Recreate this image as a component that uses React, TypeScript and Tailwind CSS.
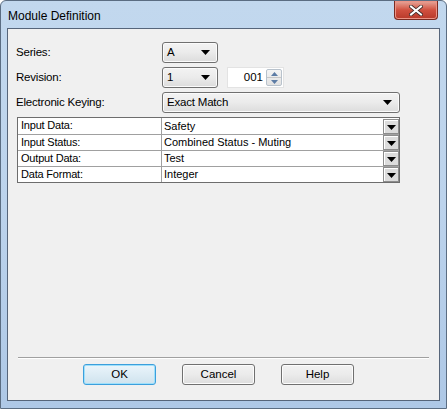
import React from 'react'

const UI = { fontFamily: '"Liberation Sans", Arial, sans-serif' }

function Caret({ className = '' }: { className?: string }) {
  return (
    <svg width="9" height="5" viewBox="0 0 9 5" className={className}>
      <path d="M0 0h9L4.5 5z" fill="#000" />
    </svg>
  )
}

function Combo({ value, className = '' }: { value: string; className?: string }) {
  return (
    <div
      className={`flex h-[21px] items-center justify-between rounded-[3px] border border-[#707070] bg-gradient-to-b from-[#f3f3f3] via-[#ebebeb] to-[#dcdcdc] pl-[4px] pr-[7px] text-[11.5px] tracking-[-0.2px] text-black shadow-[inset_0_0_0_1px_#fbfbfb] ${className}`}
    >
      <span>{value}</span>
      <Caret />
    </div>
  )
}

function Spinner({ value }: { value: string }) {
  return (
    <div className="flex h-[21px] w-[57px] border border-[#e3e3e3] bg-white">
      <span className="flex-1 pr-[3px] text-right text-[11.5px] leading-[19px] text-black">{value}</span>
      <div className="my-[1px] mr-[1px] flex w-[16px] flex-col rounded-[2px] border border-[#b8c2cc] bg-gradient-to-b from-[#f4f4f4] to-[#e2e2e2]">
        <div className="flex flex-1 items-center justify-center border-b border-[#c8c8c8]">
          <svg width="7" height="4" viewBox="0 0 7 4">
            <path d="M0 4L3.5 0 7 4z" fill="#5d7ca5" />
          </svg>
        </div>
        <div className="flex flex-1 items-center justify-center">
          <svg width="7" height="4" viewBox="0 0 7 4">
            <path d="M0 0h7L3.5 4z" fill="#5d7ca5" />
          </svg>
        </div>
      </div>
    </div>
  )
}

const ROWS = [
  ['Input Data:', 'Safety'],
  ['Input Status:', 'Combined Status - Muting'],
  ['Output Data:', 'Test'],
  ['Data Format:', 'Integer'],
]

function Button({ label, isDefault }: { label: string; isDefault?: boolean }) {
  return (
    <button
      className={`h-[21px] w-[73px] rounded-[3px] border text-[11.5px] text-black ${
        isDefault
          ? 'border-[#3c9fdc] bg-gradient-to-b from-[#ebf5fb] to-[#cfe3ee] shadow-[inset_0_0_0_1px_#9fe0fb]'
          : 'border-[#707070] bg-gradient-to-b from-[#f2f2f2] via-[#ebebeb] to-[#dddddd] shadow-[inset_0_0_0_1px_#fcfcfc]'
      }`}
    >
      {label}
    </button>
  )
}

export default function App() {
  return (
    <div
      style={UI}
      className="flex h-[409px] w-[447px] flex-col rounded-t-[6px] border border-[#5b6d82] bg-gradient-to-b from-[#c2d8ee] via-[#bcd3ec] to-[#aec8e6]"
    >
      {/* Caption */}
      <div className="flex h-[27px] items-start justify-between pl-[7px] pr-[8px]">
        <span className="mt-[6px] text-[12px] text-black">Module Definition</span>
        <div className="flex h-[19px] w-[44px] items-center justify-center rounded-b-[4px] border border-t-0 border-[#7a2b22] bg-gradient-to-b from-[#e6a79c] via-[#d0503f] to-[#b8392a] shadow-[inset_0_0_0_1px_#ec9486]">
          <svg width="14" height="11" viewBox="0 0 14 11">
            <path d="M2 1.5l10 8M12 1.5l-10 8" stroke="#3d2a28" strokeWidth="3.6" strokeLinecap="square" />
            <path d="M2 1.5l10 8M12 1.5l-10 8" stroke="#fff" strokeWidth="2" strokeLinecap="square" />
          </svg>
        </div>
      </div>

      {/* Client area */}
      <div className="mx-[6px] mb-[7px] flex flex-1 flex-col border border-[#56657a] bg-[#f0f0f0]">
        <div className="flex flex-col gap-[4px] pl-[8px] pr-[39px] pt-[13px]">
          <div className="flex items-center">
            <span className="w-[146px] text-[11.5px] tracking-[-0.2px] text-black">Series:</span>
            <Combo value="A" className="w-[56px]" />
          </div>
          <div className="flex items-center">
            <span className="w-[146px] text-[11.5px] tracking-[-0.2px] text-black">Revision:</span>
            <Combo value="1" className="w-[56px]" />
            <div className="ml-[9px]">
              <Spinner value="001" />
            </div>
          </div>
          <div className="flex items-center">
            <span className="w-[146px] text-[11.5px] tracking-[-0.2px] text-black">Electronic Keying:</span>
            <Combo value="Exact Match" className="flex-1" />
          </div>

          <div className="ml-[1px] border border-[#6d6d6d] bg-[#a0a0a0]">
            {ROWS.map(([k, v], i) => (
              <div key={k} className={`flex h-[16px] ${i > 0 ? 'border-t border-[#a0a0a0]' : ''}`}>
                <div className="w-[144px] border-r border-[#a0a0a0] bg-white pl-[3px] text-[11px] leading-[15px] tracking-[-0.2px] text-black">
                  {k}
                </div>
                <div className="flex flex-1 items-center bg-white pl-[2px] text-[11px] leading-[15px] text-black">
                  <span className="flex-1">{v}</span>
                  <div className="flex h-[15px] w-[16px] items-end justify-center border border-[#8c8c8c] bg-[#dcdcdc] pb-[3px] shadow-[inset_1px_1px_0_#fff]">
                    <Caret />
                  </div>
                </div>
              </div>
            ))}
          </div>
        </div>

        <div className="flex-1" />

        <div className="mx-[10px] border-t border-[#a0a0a0] border-b-white border-b" />
        <div className="flex gap-[26px] pb-[15px] pl-[75px] pt-[5px]">
          <Button label="OK" isDefault />
          <Button label="Cancel" />
          <Button label="Help" />
        </div>
      </div>
    </div>
  )
}
